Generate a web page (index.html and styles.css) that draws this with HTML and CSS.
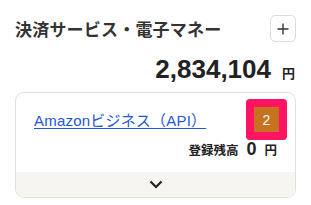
FILE: index.html
```html
<!DOCTYPE html>
<html lang="ja">
<head>
<meta charset="utf-8">
<link rel="stylesheet" href="styles.css">
</head>
<body>
<div class="panel">
  <div class="head">
    <h2 class="title">決済サービス・電子マネー</h2>
    <button class="add" type="button" aria-label="追加">
      <svg width="12" height="12" viewBox="0 0 12 12"><path d="M6 0.5V11.5M0.5 6H11.5" stroke="#333" stroke-width="1.4" fill="none"/></svg>
    </button>
  </div>
  <div class="total"><span class="total-num">2,834,104</span><span class="total-yen">円</span></div>
  <div class="card">
    <div class="card-body">
      <div class="row">
        <a class="link" href="#">Amazonビジネス（API）</a>
        <span class="badge">2</span>
      </div>
      <div class="balance"><span class="bal-label">登録残高</span><span class="bal-num">0</span><span class="bal-yen">円</span></div>
    </div>
    <div class="card-foot">
      <svg width="14" height="9" viewBox="0 0 14 9"><path d="M1.5 1.5L7 7L12.5 1.5" stroke="#222" stroke-width="2.2" fill="none"/></svg>
    </div>
  </div>
</div>
</body>
</html>
```
FILE: styles.css
```css
html, body {
  margin: 0;
  padding: 0;
  background: #fff;
}
body {
  font-family: "Liberation Sans", "Noto Sans CJK JP", sans-serif;
  color: #333;
}
.panel {
  padding: 15px 15px 0 15px;
}
.head {
  display: flex;
  align-items: center;
  justify-content: space-between;
  height: 27px;
}
.title {
  margin: 0;
  font-family: "Noto Sans CJK JP", sans-serif;
  font-size: 17px;
  font-weight: 700;
  line-height: 24px;
  color: #333;
  letter-spacing: 0.2px;
}
.add {
  width: 26px;
  height: 27px;
  box-sizing: border-box;
  border: 1px solid #dcdcdc;
  border-radius: 5px;
  background: #fff;
  padding: 0;
  display: flex;
  align-items: center;
  justify-content: center;
}
.total {
  display: flex;
  justify-content: flex-end;
  align-items: baseline;
  margin-top: 12px;
  line-height: 30px;
  padding-right: 1px;
}
.total-num {
  font-family: "Liberation Sans", sans-serif;
  font-weight: 700;
  font-size: 26px;
  color: #222;
}
.total-yen {
  font-family: "Noto Sans CJK JP", sans-serif;
  font-weight: 700;
  font-size: 13px;
  margin-left: 11px;
  color: #222;
}
.card {
  margin-top: 4px;
  border: 1px solid #e2e0dc;
  border-radius: 9px;
  overflow: hidden;
}
.card-body {
  padding: 14px 18px 13px 18px;
}
.row {
  display: flex;
  justify-content: space-between;
  align-items: center;
}
.link {
  font-family: "Liberation Sans", "Noto Sans CJK JP", sans-serif;
  font-size: 15px;
  letter-spacing: 0.2px;
  color: #2456d8;
  text-decoration: underline;
  text-underline-offset: 2px;
}
.badge {
  width: 25px;
  height: 25px;
  margin-right: -2px;
  background: #c6721f;
  color: #fff;
  font-size: 14px;
  display: flex;
  align-items: center;
  justify-content: center;
  border-radius: 1px;
  box-shadow: 0 0 0 8px #ff1464;
}
.balance {
  display: flex;
  justify-content: flex-end;
  align-items: baseline;
  margin-top: 8px;
  line-height: 18px;
  color: #222;
}
.bal-label {
  font-family: "Noto Sans CJK JP", sans-serif;
  font-weight: 700;
  font-size: 12.5px;
}
.bal-num {
  font-family: "Liberation Sans", sans-serif;
  font-weight: 700;
  font-size: 18px;
  margin-left: 8px;
}
.bal-yen {
  font-family: "Noto Sans CJK JP", sans-serif;
  font-weight: 700;
  font-size: 12.5px;
  margin-left: 8px;
}
.card-foot {
  height: 25px;
  background: #f6f5f1;
  display: flex;
  align-items: center;
  justify-content: center;
}
```
